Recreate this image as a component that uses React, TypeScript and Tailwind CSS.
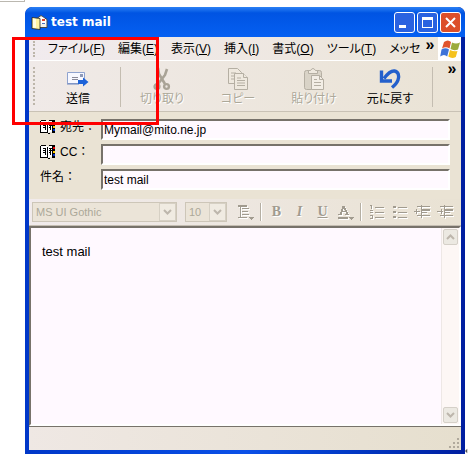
import type { ReactNode } from 'react';

const MENUS = [
  { label: 'ファイル', key: 'F' },
  { label: '編集', key: 'E' },
  { label: '表示', key: 'V' },
  { label: '挿入', key: 'I' },
  { label: '書式', key: 'O' },
  { label: 'ツール', key: 'T' },
];

function MailIcon() {
  return (
    <svg viewBox="0 0 17 16" className="h-4 w-[17px] shrink-0">
      <path d="M4.500 5.500L10 1.500l6 4v8h-11z" fill="#f6f3ea" stroke="#4a4a4a" />
      <path d="M7 5l4-2.500L15 6v4H8z" fill="#fff" />
      <path d="M11 5h3v2h-3z" fill="#e0442a" />
      <path d="M11 9h3v1h-3z" fill="#4a6fc0" />
      <path d="M1 3.500l8 1v11l-8-1z" fill="#fff3a0" stroke="#222" strokeWidth=".8" />
      <path d="M2 4.500l3 .5v9l-3-.5z" fill="#fffce0" />
    </svg>
  );
}

function SendIcon() {
  return (
    <svg viewBox="0 0 22 16" className="h-4 w-[22px]">
      <path d="M.5 1.500h17v11H.5z" fill="#f7f8ff" stroke="#8fa3cf" />
      <path d="M0 13h12" stroke="#6d86bd" />
      <path d="M13 3h3v3h-3z" fill="#8f9ab8" />
      <path d="M5 6.500h6M5 8.500h6" stroke="#8a8a98" />
      <path d="M11 9h5V6.500l5.500 4.500-5.500 4.500V13h-5z" fill="#1c62d8" />
    </svg>
  );
}

function CutIcon() {
  return (
    <svg viewBox="0 0 18 24" className="h-6 w-[18px]" fill="none" stroke="#a9a396">
      <path d="M5 1l1 6 6 10M14 2l-2 6-7 9" strokeWidth="2.600" />
      <circle cx="4" cy="19.500" r="2.400" strokeWidth="2.400" />
      <circle cx="13.500" cy="19.500" r="2.400" strokeWidth="2.400" />
    </svg>
  );
}

function CopyIcon() {
  return (
    <svg viewBox="0 0 22 24" className="h-6 w-[22px]" fill="#efe9df" stroke="#b5afa3">
      <path d="M1.500 1.500h9l4 4v11h-13z" />
      <path d="M4 6h5M4 9h7M4 12h6" />
      <path d="M7.500 6.500h9l4 4v12h-13z" />
      <path d="M16.500 6.500v4h4M10 11h4M10 13.500h8M10 16h8M10 18.500h8" />
    </svg>
  );
}

function PasteIcon() {
  return (
    <svg viewBox="0 0 22 24" className="h-6 w-[22px]" stroke="#b5afa3">
      <rect x="1.500" y="3.500" width="17" height="19" rx="2" fill="#d9d3c7" />
      <path d="M5.500 6.500v-3h2q2.500-4 5 0h2v3z" fill="#efe9df" />
      <path d="M8.500 8.500h8l4 4v10h-12z" fill="#f3eee6" />
      <path d="M16.500 8.500v4h4M11 12.500h3M11 15.500h7M11 18.500h7" fill="none" />
    </svg>
  );
}

function UndoIcon() {
  return (
    <svg viewBox="0 0 22 24" className="h-6 w-[22px]" fill="none" stroke="#2460cc">
      <path d="M5 11.500C9 6 12 3.500 15.500 4c4 .6 5 5 3.500 9-1 3-3 5-6 7.500" strokeWidth="3.400" />
      <path d="M2.500 3.500v10.500h10.500" strokeWidth="3.400" />
    </svg>
  );
}

function BookIcon() {
  return (
    <svg viewBox="0 0 16 15" className="h-[15px] w-4 shrink-0" shapeRendering="crispEdges">
      <path d="M1 2h6l1 1 1-1h4v11H9l-1 1-1-1H1z" fill="#fff" />
      <path d="M.5 2v11.500M1 1.500h5M9 1.500h4M0 13.500h7M8 14.500h2M7.500 3v11M3 4.500h3M3 6.500h3M3 8.500h2M5.500 5v6M9 4.500h3M9 6.500h3M9 8.500h2M10.500 5v6" stroke="#000" fill="none" />
      <path d="M12 1h3v13h-3z" fill="#000" />
      <path d="M13 3h2v2h-2z" fill="#e00" />
      <path d="M13 7h2v2h-2z" fill="#fc0" />
      <path d="M13 10h2v2h-2z" fill="#03c" />
    </svg>
  );
}

function FlagIcon() {
  return (
    <svg viewBox="0 0 20 18" className="h-[18px] w-5">
      <path d="M4 2q4-3 7 0L9.500 8.500Q6 6 2 8.500z" fill="#e0532c" />
      <path d="M12 2.500q4 2 8 0L18 9.500q-4 1.500-7.500-.5z" fill="#9cab3c" />
      <path d="M1.500 9.500q4-2.500 7.500 0l-1.800 7q-3-3-7 0z" fill="#3f74d8" />
      <path d="M10 10q4 2 7.500 1l-1.700 6q-4 2-7.500-.5z" fill="#f5c21e" />
    </svg>
  );
}

function Chevron({ up = false }: { up?: boolean }) {
  return (
    <svg viewBox="0 0 9 6" className="h-[6px] w-[9px]" fill="none" stroke="#bdb6ac" strokeWidth="2">
      <path d={up ? 'M1 5l3.500-3.500L8 5' : 'M1 1l3.500 3.500L8 1'} />
    </svg>
  );
}

function MoreButton({ label, className }: { label: string; className: string }) {
  return (
    <button aria-label={label} className={`h-4 w-4 shrink-0 text-center text-base leading-4 font-bold ${className}`}>
      »
    </button>
  );
}

function Grip({ className }: { className: string }) {
  return <div className={`w-0 shrink-0 border-l-2 border-dotted border-[#bdb6aa] ${className}`} />;
}

function ToolButton({ icon, label, disabled = false }: { icon: ReactNode; label: string; disabled?: boolean }) {
  return (
    <button disabled={disabled} className="flex w-[76px] shrink-0 flex-col items-center text-black disabled:text-[#aca899] disabled:[text-shadow:1px_1px_0_#fff]">
      <span className="flex h-6 items-center">{icon}</span>
      <span className="text-xs leading-4 whitespace-nowrap [font-feature-settings:'palt']">{label}</span>
    </button>
  );
}

function FormatButton({ label, children }: { label: string; children: ReactNode }) {
  return (
    <button disabled aria-label={label} className="flex h-5 w-[23px] shrink-0 items-center justify-center font-['Liberation_Serif',serif] text-sm font-bold text-[#a19b8f] [text-shadow:1px_1px_0_#fff]">
      {children}
    </button>
  );
}

function FormatIcon({ d, arrow = false }: { d: string; arrow?: boolean }) {
  return (
    <svg viewBox="0 0 17 16" className="h-4 w-[17px]" shapeRendering="crispEdges" fill="none" stroke="#a19b8f">
      <path d={d} stroke="#fff" transform="translate(1 1)" />
      <path d={d} />
      {arrow && <path d="M12 13h5l-2.500 3z" fill="#a19b8f" stroke="none" />}
    </svg>
  );
}

function Field({ id, label, value, book = false }: { id: string; label: string; value: string; book?: boolean }) {
  return (
    <div className="flex h-[21px]">
      <label htmlFor={id} className="flex w-[61px] shrink-0 items-start gap-1 leading-4">
        {book && <BookIcon />}
        <span className="whitespace-nowrap">{label}</span>
      </label>
      <input
        id={id}
        defaultValue={value}
        className="h-[21px] min-w-0 flex-1 border-2 border-t-[#77726a] border-r-white border-b-white border-l-[#77726a] bg-[#fff9ff] px-px text-xs outline-none"
      />
    </div>
  );
}

function Dropdown({ label, value, className }: { label: string; value: string; className: string }) {
  return (
    <div className={`relative h-5 shrink-0 ${className}`}>
      <select disabled aria-label={label} className="h-5 w-full appearance-none border border-[#cdc6b8] bg-[#ebe4d8] pl-[3px] text-[11px] text-[#aca899] opacity-100">
        <option>{value}</option>
      </select>
      <span className="pointer-events-none absolute top-px right-px flex h-[18px] w-[17px] items-center justify-center border border-[#d6d0c4] bg-[#f0ebe2]">
        <Chevron />
      </span>
    </div>
  );
}

function Divider() {
  return <div className="mx-[3px] h-[18px] w-0 shrink-0 border-r border-l border-r-white border-l-[#b5afa3]" />;
}

const captionButton = 'flex h-[21px] w-[21px] items-center justify-center rounded-[3px] border border-white';

export default function App() {
  return (
    <div className="relative h-screen overflow-hidden bg-white pt-[7px] pr-[3px] pb-1 pl-[25px] font-['Liberation_Sans','Noto_Sans_CJK_JP',sans-serif] text-xs text-black">
      <div className="absolute top-0 left-0 h-[2px] w-[25px] border-r border-b border-[#bbb8b0]" />
      <main className="flex h-full flex-col overflow-hidden rounded-t-[7px] bg-linear-to-r from-[#0037c8] via-[#0b50e8] to-[#001ea0] px-1 pb-1">
        <header className="-mx-1 flex h-[30px] shrink-0 items-center rounded-t-[7px] bg-linear-to-b from-[#2a80f4] via-[#0054e3] via-20% to-[#0560f2] pr-1 pl-[6px]">
          <MailIcon />
          <h1 className="ml-[3px] flex-1 font-['DejaVu_Sans',sans-serif] text-xs font-bold text-white">test mail</h1>
          <div className="flex gap-[2px]">
            <button aria-label="最小化" className={`${captionButton} bg-[#2a62e0]`}>
              <span className="mt-[9px] mr-1 h-[3px] w-[7px] bg-white" />
            </button>
            <button aria-label="最大化" className={`${captionButton} bg-[#2a62e0]`}>
              <span className="h-[11px] w-[11px] border border-t-[3px] border-white" />
            </button>
            <button aria-label="閉じる" className={`${captionButton} bg-[#dc4f2a]`}>
              <svg viewBox="0 0 11 11" className="h-[11px] w-[11px]" stroke="#fff" strokeWidth="2">
                <path d="M1 1l9 9M10 1l-9 9" />
              </svg>
            </button>
          </div>
        </header>

        <nav className="flex h-6 shrink-0 items-center border-b border-white bg-linear-to-r from-[#f1ebee] to-[#ece5d8]">
          <Grip className="ml-1 h-4" />
          <div className="ml-[13px] flex min-w-0 flex-1 gap-[13px] overflow-hidden whitespace-nowrap [font-feature-settings:'palt']">
            {MENUS.map((m) => (
              <button key={m.key} className="shrink-0">
                {m.label}(<u>{m.key}</u>)
              </button>
            ))}
            <button className="shrink-0">メッセ</button>
          </div>
          <MoreButton label="その他のメニュー" className="mb-2" />
          <div className="flex h-full w-[23px] shrink-0 items-center justify-center bg-white">
            <FlagIcon />
          </div>
        </nav>

        <section className="flex h-[51px] shrink-0 items-start overflow-hidden border-b border-[#c9c2b5] bg-linear-to-r from-[#f0eae8] to-[#eae3d5]">
          <div className="flex min-w-0 flex-1 overflow-hidden pt-[6px]">
            <Grip className="mr-[5px] ml-1 h-[38px]" />
            <ToolButton icon={<SendIcon />} label="送信" />
            <div className="mr-[3px] ml-1 h-10 border-l border-[#c4bdb1]" />
            <ToolButton icon={<CutIcon />} label="切り取り" disabled />
            <ToolButton icon={<CopyIcon />} label="コピー" disabled />
            <ToolButton icon={<PasteIcon />} label="貼り付け" disabled />
            <ToolButton icon={<UndoIcon />} label="元に戻す" />
            <div className="ml-1 h-10 border-l border-[#c4bdb1]" />
          </div>
          <MoreButton label="その他のボタン" className="mr-px" />
        </section>

        <form className="flex shrink-0 flex-col gap-1 bg-[#eae3d4] pt-[7px] pr-[11px] pb-[9px] pl-[11px]">
          <Field id="to" label="宛先：" value="Mymail@mito.ne.jp" book />
          <Field id="cc" label="CC：" value="" book />
          <Field id="subject" label="件名：" value="test mail" />
        </form>

        <section className="flex h-[27px] shrink-0 items-center overflow-hidden border-b border-[#c4bdb1] bg-linear-to-r from-[#f1ebec] to-[#e9e2d3] pl-[3px]">
          <Dropdown label="フォント" value="MS UI Gothic" className="mr-2 w-[145px]" />
          <Dropdown label="サイズ" value="10" className="mr-[7px] w-[42px]" />
          <FormatButton label="段落スタイル">
            <FormatIcon d="M1 1.500h9M1 2.500h9M1 13.500h9M5 4.500h7M5 7.500h6M5 10.500h7M3.500 2v12" arrow />
          </FormatButton>
          <Divider />
          <FormatButton label="太字">B</FormatButton>
          <FormatButton label="斜体"><i>I</i></FormatButton>
          <FormatButton label="下線"><u>U</u></FormatButton>
          <FormatButton label="文字の色">
            <FormatIcon d="M1 10.500h4M8 10.500h4M3.500 10L6 2l4 8M4.500 10L7 2l4 8M4 7.500h5M1 13.500h10M1 14.500h10" arrow />
          </FormatButton>
          <Divider />
          <FormatButton label="番号付き">
            <FormatIcon d="M3.500 1v4M2 1.500h2M2 6.500h3M2 8.500h3M2 11.500h3M2 14.500h3M4.500 11v4M7 3.500h9M7 8.500h9M7 13.500h9" />
          </FormatButton>
          <FormatButton label="箇条書き">
            <FormatIcon d="M2 2.500h3M2 3.500h3M2 7.500h3M2 8.500h3M2 12.500h3M2 13.500h3M7 3.500h9M7 8.500h9M7 13.500h9" />
          </FormatButton>
          <FormatButton label="インデント解除">
            <FormatIcon d="M3 2.500h13M7 5.500h9M7 6.500h9M7 8.500h6M3 11.500h13M0 7.500h6M2.500 5v5M7.500 1v13" />
          </FormatButton>
          <FormatButton label="インデント">
            <FormatIcon d="M3 2.500h13M7 5.500h9M7 6.500h9M7 8.500h6M3 11.500h13M0 7.500h6M4.500 5v5M7.500 1v13" />
          </FormatButton>
        </section>

        <section className="flex min-h-0 flex-1 border-2 border-t-[#77726a] border-r-white border-b-white border-l-[#77726a] bg-[#fff9ff]">
          <textarea aria-label="本文" defaultValue="test mail" className="min-w-0 flex-1 resize-none overflow-hidden px-[11px] py-4 text-[13px] leading-4 outline-none" />
          <div className="flex w-[18px] flex-col justify-between border-l border-[#eee8e6] bg-[#fdf7f5] p-px">
            <button aria-label="上へ" className="flex h-4 items-center justify-center rounded-[2px] border border-[#d5d0c8] bg-[#ece9e2]">
              <Chevron up />
            </button>
            <button aria-label="下へ" className="flex h-4 items-center justify-center rounded-[2px] border border-[#d5d0c8] bg-[#ece9e2]">
              <Chevron />
            </button>
          </div>
        </section>

        <footer className="flex h-6 shrink-0 items-end justify-end border-t border-[#77726a] bg-linear-to-r from-[#efe8e4] to-[#e6dfce] p-px">
          <svg viewBox="0 0 12 12" className="h-3 w-3" fill="#b0a99c" shapeRendering="crispEdges">
            <path d="M9 1h2v2H9zM5 5h2v2H5zM9 5h2v2H9zM1 9h2v2H1zM5 9h2v2H5zM9 9h2v2H9z" />
          </svg>
        </footer>
      </main>
      <div className="pointer-events-none absolute top-[37px] left-3 h-[88px] w-[147px] border-[3px] border-[#f00]" />
      <svg viewBox="0 0 4 6" className="absolute right-0 bottom-1 h-[6px] w-[3px]">
        <path d="M0 3l3-3v6z" fill="#555" />
      </svg>
    </div>
  );
}
